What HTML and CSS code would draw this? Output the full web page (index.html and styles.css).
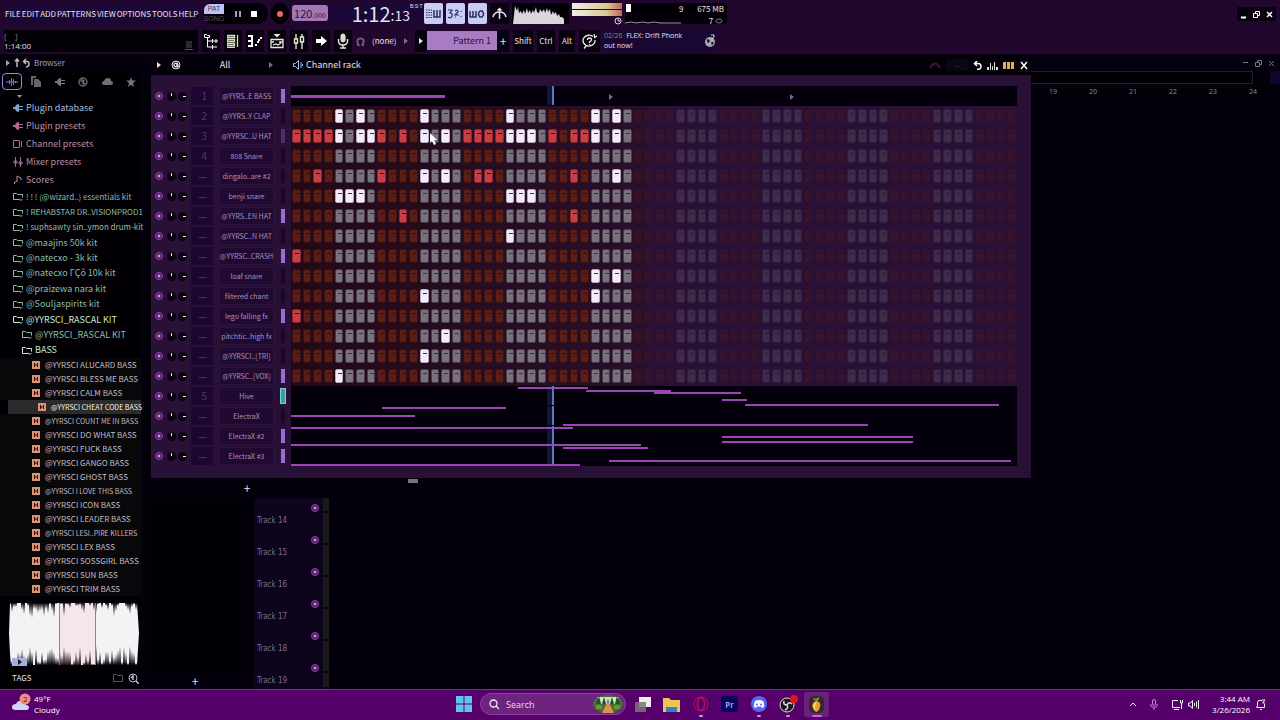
FILE: index.html
```
<!DOCTYPE html>
<html lang="en">
<head>
    <meta charset="UTF-8">
    <meta name="viewport" content="width=device-width, initial-scale=1.0">
    <title>FL Studio - Channel rack</title>
    <link rel="stylesheet" href="styles.css">
</head>
<body>
    <header class="toolbar">
        <div class="bar">
            <nav class="menu">
                <a href="#">FILE</a><a href="#">EDIT</a><a href="#">ADD</a><a href="#">PATTERNS</a><a href="#">VIEW</a><a href="#">OPTIONS</a><a href="#">TOOLS</a><a href="#">HELP</a>
            </nav>
            <div class="transport">
                <button class="mode"><span class="pat">PAT</span><span class="song">SONG</span></button>
                <button aria-label="Pause"><svg width="6" height="6"><path d="M0 0h2v6H0zM4 0h2v6H4z" fill="#a99fb5"/></svg></button>
                <button aria-label="Stop"><svg width="6" height="6"><path d="M0 0h6v6H0z" fill="#fff"/></svg></button>
            </div>
            <button class="rec" aria-label="Record"></button>
            <button class="tempo">120<small>.000</small></button>
            <div class="clock">1:12<span>:13</span><sup>B:S:T</sup></div>
            <button class="lit" aria-label="Typing keyboard"><svg width="17" height="12" viewBox="0 0 17 12" stroke="#273064" fill="none"><path d="M1 2h6M1 4.500h6M1 7h6M1 9.500h6" stroke-dasharray="1.500 .8"/><path d="M9 2v7h6V2M12 2v7" stroke-width="1.500"/></svg></button>
            <button class="lit" aria-label="Countdown"><svg width="17" height="12" viewBox="0 0 17 12" stroke="#273064" fill="none" stroke-width="1.200"><path d="M1 2h4L3 5q3 0 2 3t-4 1M8 9h1M8 3q3-2 3 1L8 7h4M14 3v1M14 8v1"/></svg></button>
            <button class="lit" aria-label="Loop record"><svg width="17" height="12" viewBox="0 0 17 12" stroke="#273064" fill="none" stroke-width="1.500"><path d="M1 3v6h6V3M4 3v6M11 9q-3-3 0-6h3M13 3q3 3 0 6h-3"/></svg></button>
            <button class="dark" aria-label="Metronome"><svg width="17" height="13" viewBox="0 0 17 13" stroke="#e8e4ee" fill="none" stroke-width="1.500"><path d="M2 10q1-5 6.500-5T15 10M8.500 1v11M6.500 3.500l2-2 2 2"/></svg></button>
            <svg class="spectrum" viewBox="0 0 57 21" preserveAspectRatio="none"><path d="M1 21L3 3l2 5 1-4 1 6 2-2 1 3 2-4 1 4 2-6 1 5 2-3 1 4 2-4 1 3 2-6 1 5 2 1 1-4 2 3 2-3 1 4 2-5 1 4 2-3 1 6 2-4 1 3 2-2 1 4 2-2 1 3 2 0 2 2v10z" fill="#d9d6dd"/></svg>
            <div class="meter">
                <div class="level"></div><div class="level"></div>
                <svg width="8" height="8" viewBox="0 0 8 8" fill="none" stroke="#d8d8d8"><circle cx="4" cy="4" r="3"/><path d="M4 2v2h2"/></svg>
            </div>
            <div class="stats">
                <svg class="cpu" viewBox="0 0 60 21"><path d="M1 1h5v8H1z" fill="#fff"/><path d="M0 20l6-1 5 1 7-1 5 1 6-1 6 1h21" stroke="#9b97a3" fill="none"/></svg>
                <span>9</span>
                <span class="ram">675 MB<br>7 <svg width="9" height="6" viewBox="0 0 9 6"><ellipse cx="4" cy="3" rx="3" ry="2" fill="none" stroke="#777"/></svg></span>
            </div>
            <div class="window-buttons">
                <button aria-label="Minimize"><svg width="9" height="9" stroke="#fff"><path d="M2 7.500h5" stroke-width="2"/></svg></button>
                <button aria-label="Restore"><svg width="9" height="9" stroke="#fff" fill="none"><path d="M1.500 3.500h4v4h-4zM3.500 3V1.500h4v4H6"/></svg></button>
                <button aria-label="Close"><svg width="9" height="9" stroke="#fff" stroke-width="1.500"><path d="M2 2l5 5M7 2L2 7"/></svg></button>
            </div>
        </div>
        <div class="bar second">
            <div class="hint"><span>[&nbsp;&nbsp;&nbsp; ]</span><b>1:14:00</b>
                <svg width="10" height="10" viewBox="0 0 10 10" stroke="#55505c" fill="none"><path d="M3 0v7M5 0v7M7 0v7M1 8.500h8"/></svg>
            </div>
            <button class="tool" aria-label="Playlist"><svg width="14" height="16" viewBox="0 0 14 16" stroke="#fff" fill="none"><path d="M.5 1.500h2l1 1h2v2h-5zM3.500 5v9H8M3.500 8H8M8.500 6v4M8.500 12v4M9 8h5M9 14h4M12 6v4"/></svg></button>
            <button class="tool" aria-label="Piano roll"><svg width="12" height="14" viewBox="0 0 12 14" stroke="#cfe3b4" fill="none"><path d="M.5 1.500h7v2h-7zM.5 5.500h7v2h-7zM.5 9.500h7v2h-7zM10.500 1v12M0 13.500h8" stroke-width="1.300"/></svg></button>
            <button class="tool" aria-label="Channel rack"><svg width="14" height="12" viewBox="0 0 14 12" fill="#fff"><path d="M0 0h5v2H0zM0 5h5v2H0zM0 10h5v2H0zM3 0h2v12H3zM7 9h2v2H7zM9 6h2v2H9zM10 4h2v2h-2zM12 2h2v2h-2z"/></svg></button>
            <button class="tool" aria-label="Event editor"><svg width="14" height="15" viewBox="0 0 14 15" stroke="#e7eadb" fill="none"><path d="M5 .5h4L7 2.500zM1 5.500h12v8H1zM1 8h3M9 8h4M3 11l3-1 2 1 3-2" stroke-width="1.300"/></svg></button>
            <button class="tool" aria-label="Mixer"><svg width="12" height="15" viewBox="0 0 12 15" stroke="#dfe8cf" fill="none"><path d="M3 0v5M3 9v6M9 0v3M9 7v8M1.500 5h3v4h-3zM7.500 3h3v5h-3z" stroke-width="1.400"/></svg></button>
            <button class="tool" aria-label="Next"><svg width="11" height="10"><path d="M0 3h5V0l6 5-6 5V7H0z" fill="#fff"/></svg></button>
            <button class="tool" aria-label="Microphone"><svg width="12" height="16" viewBox="0 0 12 16" fill="none" stroke="#e8e8dc"><rect x="4" y="1" width="4" height="8" rx="2" fill="#dadaca"/><path d="M1.500 6v2q0 4 4.500 4t4.500-4V6M6 12v3M3 15h6" stroke-width="1.400"/></svg></button>
            <label class="snap"><svg width="9" height="9" viewBox="0 0 9 9" fill="none" stroke="#67616d" stroke-width="2"><path d="M1 8h1.500Q-.5 1.500 4.500 1.500T6.500 8H8"/></svg><select aria-label="Snap"><option>(none)</option></select><i class="arrow grey"></i></label>
            <div class="pattern"><button aria-label="Previous"><i class="arrow"></i></button><select aria-label="Pattern"><option>Pattern 1</option></select><button aria-label="Add pattern">+</button></div>
            <button class="key shift">Shift</button>
            <button class="key">Ctrl</button>
            <button class="key alt">Alt</button>
            <button class="help" aria-label="Help"><svg width="16" height="15" viewBox="0 0 16 15" stroke="#eee" fill="none" stroke-width="1.300"><path d="M11 2.500A6 5.500 0 1 0 13 6M4 12l-2 2.500M5.500 6q0-2 2-2t2 1.500T7.500 8v1M7.500 10v1M12 0l1 4M15 2l-3 2"/></svg></button>
            <div class="news"><p><span>02/26</span>&nbsp; FLEX: Drift Phonk<br>out now!</p><svg width="12" height="14" viewBox="0 0 12 14"><circle cx="6" cy="8" r="5" fill="#aaa5b3"/><path d="M3 5l3 1-1 3-2-1zM7 8h3l-2 4z" fill="#261638"/><path d="M7 1h3v2l-2 2" stroke="#ddd" fill="none"/></svg></div>
        </div>
    </header>

    <main class="desk">
        <aside class="browser">
            <div class="browser-title"><i class="arrow"></i><svg width="16" height="10" viewBox="0 0 16 10" fill="none" stroke="#bbb" stroke-width="1.500"><path d="M3 9V1M1 3.500l2-2.500 2 2.500M10 3.500h3q2 0 2 2.500t-3 3M12 1L9.500 3.500 12 6"/></svg>Browser</div>
            <div class="tabs">
                <button class="active" aria-label="All"><svg width="12" height="10" stroke="#7476e8"><path d="M0 5h12M3.500 3v4M5.500 1v8M7.500 2v6M9.500 4v2"/></svg></button>
                <button aria-label="Files"><svg width="10" height="11" fill="#666"><path d="M0 0h5v2H2v7H0zM3 3h4l3 3v5H3z"/></svg></button>
                <button aria-label="Plugins"><svg width="10" height="8"><path d="M0 3h2q1-3 4-3v2h4v1H6v2h4v1H6v2Q3 8 2 5H0z" fill="#777"/></svg></button>
                <button aria-label="Online"><svg width="10" height="10"><circle cx="5" cy="5" r="4" fill="none" stroke="#666" stroke-width="1.500"/><path d="M3 2l4 1-1 2 2 2-3 1-1-3-2-1z" fill="#666"/></svg></button>
                <button aria-label="Cloud"><svg width="11" height="7"><path d="M2 7Q0 7 0 5t2-2q1-3 4-3t3 3q2 0 2 2T9 7z" fill="#707070"/></svg></button>
                <button aria-label="Starred"><svg width="10" height="10" viewBox="0 0 10 10"><path d="M5 0l1.200 3.500H10L7 6l1 4-3-2.300L2 10l1-4-3-2.500h3.800z" fill="#777"/></svg></button>
            </div>
            <div class="more"><svg width="5" height="3"><path d="M0 0h5L2.500 3z" fill="#999"/></svg></div>
            <ul class="presets">
                <li class="blue"><svg width="10" height="8"><path d="M0 3h2q1-3 4-3v2h4v1H6v2h4v1H6v2Q3 8 2 5H0z" fill="#7da4d1"/></svg>Plugin database</li>
                <li><svg width="10" height="8"><path d="M0 3h2q1-3 4-3v2h4v1H6v2h4v1H6v2Q3 8 2 5H0z" fill="#b56a8c"/></svg>Plugin presets</li>
                <li><svg width="10" height="8" fill="none" stroke="#b56a8c"><path d="M.5.500h6v7h-6zM8.500 1v6"/></svg>Channel presets</li>
                <li><svg width="10" height="10" fill="none" stroke="#9a7484"><path d="M2.500 0v10M7.500 0v10M1 4h3v2H1zM6 5h3v2H6z"/></svg>Mixer presets</li>
                <li><svg width="10" height="10" fill="none" stroke="#b5909f"><path d="M2 9q-2-1 0-2t2 0V1l4 2v2"/></svg>Scores</li>
            </ul>
            <ul class="folders" id="folders"></ul>
            <ul class="samples" id="samples"></ul>
            <div class="preview"><svg id="wave" viewBox="0 0 130 62" preserveAspectRatio="none"></svg><button aria-label="Play sample"><i class="arrow"></i></button></div>
            <div class="tags">TAGS<svg width="10" height="8" fill="none" stroke="#555"><path d="M.5 7.500v-7h3l1 1h5v6z"/></svg><svg width="11" height="11" fill="none" stroke="#b4c3da"><circle cx="5" cy="5" r="4"/><path d="M8 8l3 3M3 5l2-2v4" stroke-width="1.500"/></svg></div>
        </aside>

        <section class="playlist">
            <div class="playlist-title">
                <button aria-label="Minimize"><svg width="9" height="9" stroke="#77727f"><path d="M2 3.500h5"/></svg></button>
                <button aria-label="Restore"><svg width="9" height="9" stroke="#77727f" fill="none"><path d="M1.500 3.500h4v4h-4zM3.500 3V1.500h4v4H6"/></svg></button>
                <button aria-label="Close"><svg width="9" height="9" stroke="#77727f"><path d="M2 2l5 5M7 2L2 7"/></svg></button>
            </div>
            <div class="overview"><div></div><span></span></div>
            <div class="ruler"><span>19</span><span>20</span><span>21</span><span>22</span><span>23</span><span>24</span></div>
            <div class="arrangement">
                <div class="picker"><button aria-label="Add clip">+</button></div>
                <div class="tracks" id="tracks"></div>
                <div class="lanes"></div>
            </div>

            <section class="rack">
                <div class="rack-title">
                    <i class="arrow"></i>
                    <svg width="10" height="10" viewBox="0 0 10 10" fill="none" stroke="#eee"><circle cx="5" cy="5" r="4"/><path d="M7 3.500q-4-1-4 1.500t4 1.500V5H5" stroke-width="1.300"/></svg>
                    <select aria-label="Channel filter"><option>All</option></select><i class="arrow grey"></i>
                    <h2><svg width="10" height="10" viewBox="0 0 10 10" fill="none" stroke="#9fc0ef"><path d="M.5 3.500h2l3-3v9l-3-3h-2zM8 2v6M9.500 4v2"/></svg>Channel rack</h2>
                    <div class="rack-tools">
                        <svg width="12" height="9" fill="none" stroke="#4a1030" stroke-width="2"><path d="M1 7q5-9 10 0"/></svg>
                        <span class="swing">–</span>
                        <button aria-label="Undo"><svg width="9" height="9" fill="none" stroke="#fff" stroke-width="1.500"><path d="M4 0L1.500 2.500 4 5M2 2.500h3q3 0 3 3T4 8.500"/></svg></button>
                        <button aria-label="Graph"><svg width="11" height="9" fill="#ddd"><path d="M0 6h2v3H0zM3 2h1v7H3zM5 5h1v4H5zM7 1h1v8H7zM9 6h2v3H9z"/></svg></button>
                        <button aria-label="Steps"><svg width="12" height="8" fill="#e2b04e"><path d="M0 1h3v7H0zM4 1h3v7H4zM8 1h3v7H8z"/></svg></button>
                        <button aria-label="Close rack"><svg width="9" height="9" stroke="#fff" stroke-width="1.500"><path d="M1 1l6 7M7 1L1 8"/></svg></button>
                    </div>
                </div>
                <div class="channels" id="channels"></div>
                <div class="rack-foot"><button aria-label="Add channel">+</button><span></span></div>
            </section>
        </section>
    </main>

    <footer class="taskbar">
        <div class="weather">
            <svg width="20" height="18" viewBox="0 0 20 18"><path d="M3 17q-3 0-3-3t4-3q2-4 6-3t4 4q3 0 3 2.500T14 17z" fill="#cdd6f5"/><circle cx="13" cy="6" r="5.500" fill="#ef8d86"/><text x="11" y="9" font-size="8" fill="#51202e">2</text></svg>
            <p>49°F<br>Cloudy</p>
        </div>
        <div class="apps">
            <button aria-label="Start"><svg width="16" height="16" fill="#63c4f2"><path d="M0 0h7.500v7.500H0zM8.500 0H16v7.500H8.500zM0 8.500h7.500V16H0zM8.500 8.500H16V16H8.500z"/></svg></button>
            <label class="search">
                <svg width="11" height="11" fill="none" stroke="#eee" stroke-width="1.300"><circle cx="4.500" cy="4.500" r="3.500"/><path d="M7 7l3 3"/></svg>
                <input type="text" placeholder="Search" aria-label="Search">
                <svg class="forest" width="30" height="18" viewBox="0 0 30 18"><ellipse cx="15" cy="9" rx="15" ry="9" fill="#45702f"/><path d="M4 2h22l-4 7H8z" fill="#cfe0c8"/><path d="M6 1l2 8H3zM11 2l2 7H9zM19 2l2 7h-4zM24 1l3 8h-5zM15 3l1 6h-2z" fill="#245226"/><path d="M14 8h2l5 10H9z" fill="#e09057"/><path d="M3 10h6v4H3zM21 10h6v4h-6z" fill="#5f9b38"/></svg>
            </label>
            <button aria-label="Task view"><svg width="16" height="15"><path d="M4 0h12v10H4z" fill="#eee"/><path d="M0 5h11v10H0z" fill="#777" fill-opacity=".85"/></svg></button>
            <button aria-label="File Explorer"><svg width="17" height="15"><path d="M0 1h6l2 2h9v12H0z" fill="#f1c354"/><path d="M3 10h11v5H3z" fill="#2e86c9"/></svg></button>
            <button class="run" aria-label="Opera GX"><svg width="16" height="16" fill="none" stroke="#c3135b"><circle cx="8" cy="8" r="7"/><ellipse cx="8" cy="8" rx="3.500" ry="6" stroke-width="1.500"/></svg></button>
            <button class="pr">Pr</button>
            <button class="run" aria-label="Discord"><svg width="16" height="16" viewBox="0 0 16 16"><circle cx="8" cy="8" r="8" fill="#5865f2"/><path d="M4 5q4-2 8 0 1.500 3 1 6l-2 1-1-1.500H6L5 12l-2-1q-.5-3 1-6z" fill="#fff"/><circle cx="6" cy="8.500" r="1" fill="#5865f2"/><circle cx="10" cy="8.500" r="1" fill="#5865f2"/></svg></button>
            <button class="run" aria-label="OBS Studio"><svg width="20" height="18" viewBox="0 0 20 18"><circle cx="9" cy="10" r="7" fill="#1c1620" stroke="#ddd"/><path d="M9 10q-4 0-3-4M9 10q2-4 5-1M9 10q2 3-2 5" stroke="#ddd" fill="none" stroke-width="1.500"/><circle cx="16" cy="4" r="4" fill="#e3141c"/></svg></button>
            <button class="run current" aria-label="FL Studio"><svg width="15" height="17" viewBox="0 0 15 17"><rect width="15" height="17" rx="5" fill="#35282a"/><path d="M7.500 5q5 1 3.500 6-1 4-3.500 5-3-1-4-5-1-5 4-6z" fill="#ee9b2d"/><path d="M8 5q-3 6-1 10-3-3-3-6z" fill="#fbdb6d"/><path d="M7 5q-3-1-3-3l3 1 3-2q1 3-3 4z" fill="#74a83f"/></svg></button>
        </div>
        <div class="tray">
            <svg width="8" height="5" fill="none" stroke="#eee"><path d="M1 4l3-3 3 3"/></svg>
            <svg width="8" height="11" fill="none" stroke="#c58bcf"><rect x="2.500" y=".5" width="3" height="6" rx="1.500"/><path d="M.5 5q0 3.500 3.500 3.500T7.500 5M4 9v2"/></svg>
            <svg width="28" height="11" fill="none" stroke="#eee"><path d="M7 1.500H1.500v7H9M3 10.500h5M9.500 1v3h2V1M10.500 4v6M17.500 4v3h2l2 2.500v-8L19.500 4zM23.500 4v3M25.500 2.500v6M27.500 1v9"/></svg>
            <p>3:44 AM<br>3/26/2026</p>
            <svg width="10" height="11" fill="none" stroke="#eee"><path d="M6 1.500H3Q1.500 1.500 1.500 4v3L.5 8.500h8V5M4 10.500h2M6 1h3L6.500 4H9"/></svg>
        </div>
    </footer>

    <svg class="cursor" width="7" height="12" viewBox="0 0 7 12"><path d="M0 0l7 7H4l2 4-2 1-2-4-2 2z" fill="#fff"/></svg>
    <script src="script.js"></script>
</body>
</html>
```

FILE: styles.css
```
* {
    box-sizing: border-box;
}
body {
    margin: 0;
    height: 100vh;
    display: flex;
    flex-direction: column;
    overflow: hidden;
    background: #020009;
    color: #e6e0ec;
    font-family: "Noto Sans CJK SC", sans-serif;
    font-size: 10px;
    line-height: 12px;
}
button, select, input {
    font: inherit;
    color: inherit;
    background: none;
    border: 0;
    padding: 0;
    margin: 0;
    appearance: none;
}
button {
    display: flex;
    align-items: center;
    justify-content: center;
}
ul, p, h2 {
    margin: 0;
    padding: 0;
    list-style: none;
    font-weight: normal;
}
svg {
    display: block;
    flex: none;
}
.arrow {
    flex: none;
    border: 3px solid transparent;
    border-left: 4px solid #e6e0ec;
    border-right: 0;
}
.arrow.grey {
    border-left-color: #77717d;
}

/* toolbar */
.toolbar {
    height: 55px;
    flex: none;
    background: #21072d;
    border-bottom: 1px solid #08020f;
}
.bar {
    display: flex;
    gap: 3px;
    height: 27px;
    padding: 3px 4px 3px 4px;
    align-items: stretch;
}
.bar.second {
    gap: 4px;
    padding: 3px 4px 2px 4px;
}
.bar > * {
    flex: none;
}
.menu {
    width: 196px;
    display: flex;
    align-items: center;
    gap: 1px;
    padding-left: 1px;
    background: #1c0836;
    font-size: 8px;
}
.menu a {
    color: #e6e0ec;
    text-decoration: none;
}
.transport {
    width: 65px;
    display: flex;
    align-items: center;
    gap: 10px;
    background: #020006;
    border-radius: 10px;
}
.mode {
    flex-direction: column;
    width: 22px;
    height: 20px;
    font: 7px/10px "Liberation Sans", sans-serif;
}
.pat {
    width: 20px;
    background: #c3c2ef;
    color: #3c3b6b;
    border-radius: 6px 0 0 0;
}
.song {
    color: #55505e;
}
.rec {
    width: 18px;
    background: #020006;
    border-radius: 9px;
}
.rec::before {
    content: "";
    width: 6px;
    height: 6px;
    border-radius: 3px;
    background: #ee6672;
}
.tempo {
    width: 36px;
    margin: 2px 0 3px;
    background: #a279b6;
    border-radius: 3px;
    color: #2c1238;
    font-size: 11px;
}
.tempo small {
    font-size: 7px;
    padding-top: 3px;
}
.clock {
    width: 90px;
    display: flex;
    align-items: center;
    justify-content: flex-end;
    background: #1a0837;
    font-size: 20px;
}
.clock span {
    font-size: 14px;
    padding-top: 3px;
}
.clock sup {
    align-self: flex-start;
    width: 11px;
    font: 5px/6px "Liberation Sans", sans-serif;
}
.lit {
    width: 19px;
    background: #c9cdf6;
    border-radius: 2px;
}
.dark {
    width: 19px;
    background: #08020e;
}
.spectrum {
    width: 57px;
    height: 21px;
    background: #020006;
}
.meter {
    width: 50px;
}
.meter svg {
    margin-left: auto;
}
.level {
    height: 6px;
    margin-bottom: 1px;
    background: linear-gradient(90deg, #f0ede6, #d9c891 70%, #c1655d);
}
.stats {
    width: 102px;
    display: flex;
    background: #020006;
    font-size: 8px;
    line-height: 12px;
}
.cpu {
    width: 60px;
    height: 21px;
    margin-right: -6px;
}
.ram {
    margin-left: auto;
    padding-right: 3px;
    text-align: right;
}
.ram svg {
    display: inline-block;
}
.window-buttons {
    display: flex;
    align-items: center;
    height: 14px;
    margin: 4px 0 0 auto;
    background: #08020e;
}
.window-buttons button {
    width: 13px;
}
.hint {
    width: 194px;
    background: #030008;
    font: 8px/10px "Open Sans", sans-serif;
    display: grid;
    grid-template-columns: 1fr 14px;
    align-content: center;
}
.hint span {
    color: #87808f;
    grid-column: 1 / 3;
}
.hint b {
    font-weight: 400;
}
.tool, .help {
    width: 18px;
    background: #08020e;
}
.snap {
    width: 55px;
    display: flex;
    align-items: center;
    justify-content: space-between;
    padding-right: 3px;
    font-size: 8px;
}
.pattern {
    width: 94px;
    display: flex;
}
.pattern button {
    width: 12px;
    background: #08020e;
    font-size: 12px;
}
.pattern select {
    flex: 1;
    margin: 1px 0 2px;
    padding-right: 6px;
    background: #a77cc2;
    color: #29133a;
    text-align-last: right;
    font-size: 9px;
}
.key {
    width: 18px;
    background: #08020e;
    font-size: 8px;
}
.shift {
    width: 20px;
}
.alt {
    width: 16px;
}
.help {
    width: 21px;
}
.news {
    width: 112px;
    display: flex;
    align-items: center;
    justify-content: space-between;
    background: #180732;
    font: 7px/10px "Open Sans", sans-serif;
}
.news span {
    color: #8d8596;
}

/* browser */
.desk {
    flex: 1;
    min-height: 0;
    display: flex;
}
.browser {
    width: 146px;
    flex: none;
    display: flex;
    flex-direction: column;
    background: #020004;
    border-right: 5px solid #04010f;
}
.browser-title {
    height: 16px;
    display: flex;
    align-items: center;
    gap: 4px;
    padding-left: 6px;
    background: #04010c;
    color: #a7a1ae;
    font-size: 8px;
}
.browser-title .arrow {
    border-left-color: #a7a1ae;
}
.tabs {
    display: flex;
    height: 22px;
    padding: 2px 0 2px 2px;
    gap: 4px;
}
.tabs button {
    width: 20px;
    height: 17px;
    border-radius: 4px;
}
.tabs .active {
    border: 1px solid #8d8fd6;
}
.more {
    height: 6px;
    padding: 2px 0 0 17px;
}
.presets li {
    display: flex;
    align-items: center;
    gap: 3px;
    height: 18px;
    padding-left: 13px;
    color: #b98fa4;
    font-size: 9px;
}
.presets .blue {
    color: #a3bedb;
}
.folders {
    height: 169px;
    display: flex;
    flex-direction: column;
    color: #8dbfa4;
    font-size: 9px;
}
.folders li {
    flex: 1;
    display: flex;
    align-items: center;
    gap: 3px;
    padding-left: 13px;
    white-space: nowrap;
}
.folders .long {
    font-size: 8px;
}
.folders .sub {
    padding-left: 22px;
}
.folders .open {
    color: #c3ecd2;
}
.samples {
    font-size: 8px;
}
.samples li {
    display: flex;
    align-items: center;
    gap: 5px;
    height: 14px;
    padding-left: 32px;
    color: #c3b9c2;
    white-space: nowrap;
    background: #08080a;
}
.samples .long {
    font-size: 7px;
}
.samples .selected {
    margin-left: 8px;
    padding-left: 30px;
    background: #2b2b2d;
    color: #fff4e0;
}
.preview {
    position: relative;
    height: 70px;
    padding: 7px 2px 0 9px;
}
.preview svg {
    width: 130px;
    height: 62px;
}
.preview button {
    position: absolute;
    left: 12px;
    bottom: 0;
    width: 15px;
    height: 8px;
    background: #a6b0dc;
}
.preview .arrow {
    border-left-color: #15152a;
}
.tags {
    margin-top: auto;
    height: 22px;
    display: flex;
    align-items: center;
    gap: 5px;
    padding: 0 2px 0 12px;
    font-size: 8px;
}
.tags svg:first-of-type {
    margin-left: auto;
}

/* playlist */
.playlist {
    flex: 1;
    min-width: 0;
    position: relative;
    display: flex;
    flex-direction: column;
}
.playlist-title {
    height: 16px;
    display: flex;
    justify-content: flex-end;
    gap: 4px;
    padding-right: 4px;
    background: #05010f;
}
.overview {
    display: flex;
    justify-content: space-between;
    height: 13px;
}
.overview div {
    flex: 1;
    margin: 0 17px 0 10px;
    border: 1px solid #242028;
    background: #020004;
}
.overview span {
    width: 10px;
    background: #12042a;
}
.ruler {
    height: 14px;
    display: flex;
    justify-content: flex-end;
    padding-right: 7px;
    font: 7px/15px "Open Sans", sans-serif;
    color: #8f8a95;
}
.ruler span {
    width: 40px;
    text-align: center;
}
.arrangement {
    flex: 1;
    min-height: 0;
    display: flex;
}
.picker {
    width: 108px;
    display: flex;
    align-items: flex-end;
    justify-content: center;
    background: #020006;
}
.picker button {
    width: 100%;
    height: 16px;
    padding-right: 10px;
    background: #04010d;
    font-size: 12px;
}
.tracks {
    width: 75px;
    display: flex;
    flex-direction: column;
    justify-content: flex-end;
    overflow: hidden;
}
.track {
    flex: none;
    display: grid;
    grid-template-columns: 1fr 12px 6px;
    height: 32px;
    background: #0e041c;
    color: #7a7282;
    font: 8px/15px "DejaVu Sans Condensed", sans-serif;
}
.track span {
    padding-left: 3px;
}
.track .led {
    align-self: end;
    margin-bottom: 1px;
}
.track::after {
    content: "";
    background: #1b191c;
    margin-bottom: 2px;
}
.track:last-child {
    height: 16px;
}
.track:last-child .led {
    visibility: hidden;
}
.lanes {
    flex: 1;
    background: repeating-linear-gradient(#02000b 0 31px, #010007 31px 32px);
}

/* channel rack window */
.rack {
    position: absolute;
    left: 5px;
    right: 249px;
    top: 0;
    background: #291037;
}
.rack-title {
    display: flex;
    align-items: center;
    height: 20px;
    padding: 0 2px 0 6px;
    gap: 10px;
    background: #030009;
}
.rack-title select {
    width: 68px;
    text-align-last: center;
    font-size: 9px;
}
.rack-title h2 {
    display: flex;
    align-items: center;
    gap: 3px;
    margin-left: 10px;
    font-size: 9px;
    line-height: 14px;
}
.rack-tools {
    display: flex;
    align-items: center;
    gap: 5px;
    margin-left: auto;
}
.swing {
    width: 22px;
    background: #0b0712;
    color: #333;
    text-align: center;
}
.channels {
    padding: 11px 14px 12px 4px;
}
.channel {
    display: grid;
    grid-template-columns: 12px 11px 13px 28px 62px 10px 1fr;
    align-items: center;
    height: 20px;
}
.led {
    width: 8px;
    height: 8px;
    border: 1px solid #9b49b4;
    border-radius: 4px;
    background: radial-gradient(#d88ae6 1px, #40124e 2px);
}
.knob {
    width: 9px;
    height: 9px;
    border-radius: 5px;
    background: linear-gradient(#eee, #eee) 4px 1px / 1px 3px no-repeat #0b0411;
}
.knob.vol {
    background: linear-gradient(#eee, #eee) 5px 4px / 3px 1px no-repeat #0b0411;
}
.insert {
    width: 22px;
    height: 18px;
    padding-right: 6px;
    background: #1d0730;
    color: #52337a;
    text-align: right;
    font-size: 10px;
    line-height: 18px;
}
.name {
    width: 55px;
    height: 18px;
    background: #210a32;
    border: 1px solid #2d1440;
    color: #a990b9;
    font-size: 7px;
    white-space: nowrap;
}
.select {
    width: 4px;
    height: 14px;
    background: #180726;
}
.select.on {
    background: #9b6bd4;
}
.select.half {
    background: #513069;
}
.select.focus {
    background: #459aa3;
    outline: 1px solid #78d1d4;
}
.steps {
    display: grid;
    grid-template-columns: repeat(68, 1fr);
    height: 20px;
    align-items: center;
    background: linear-gradient(90deg, #240916, #280f2b 48%, #291037 50%);
}
.step {
    height: 14px;
    margin: 0 1px;
    border: 1px solid #39100f;
    border-radius: 2px;
    background: linear-gradient(#2b0b0c, #2b0b0c) 2px 3px / 4px 1px no-repeat #5a1e18;
}
.step.grey {
    border-color: #453d4b;
    background: linear-gradient(#38313f, #38313f) 2px 3px / 4px 1px no-repeat #79727d;
}
.step:checked {
    border-color: #8b252c;
    background-color: #c63f45;
}
.step.grey:checked {
    border-color: #b3a9c0;
    background-color: #f4ecf9;
}
.step.idle {
    opacity: 0.28;
}
.roll {
    width: 100%;
    height: 20px;
    background: #03000b;
}
.rack-foot {
    height: 20px;
    display: flex;
    background: #020009;
}
.rack-foot button {
    width: 12px;
    margin-left: 90px;
    font-size: 12px;
}
.rack-foot span {
    width: 10px;
    height: 4px;
    margin: 1px 0 0 155px;
    background: #77737c;
}

/* taskbar */
.taskbar {
    height: 31px;
    flex: none;
    display: grid;
    grid-template-columns: 1fr auto 1fr;
    align-items: center;
    padding-bottom: 2px;
    background: #56006b;
    border-top: 1px solid #793188;
    color: #fff;
    font: 8px/11px "Open Sans", sans-serif;
}
.weather {
    display: flex;
    gap: 2px;
    padding-left: 12px;
}
.apps {
    display: flex;
    align-items: center;
    gap: 4px;
}
.apps > button {
    position: relative;
    width: 25px;
    height: 25px;
    border-radius: 3px;
}
.search {
    display: flex;
    align-items: center;
    width: 146px;
    height: 22px;
    padding: 0 2px 0 8px;
    gap: 6px;
    border: 1px solid #8a4299;
    border-radius: 11px;
    background: #6e2380;
}
.search input {
    flex: 1;
    min-width: 0;
    font-size: 9px;
}
.search input::placeholder {
    color: #eadcee;
}
.apps > .pr {
    width: 17px;
    height: 16px;
    margin: 0 4px;
    background: #06065f;
    color: #b9b4ff;
    font-weight: 600;
}
.run::after {
    content: "";
    position: absolute;
    bottom: 0;
    width: 4px;
    height: 2px;
    background: #c99ad2;
    border-radius: 1px;
}
.apps .current {
    background: #692278;
}
.current::after {
    width: 10px;
    background: #cf62dd;
}
.tray {
    display: flex;
    align-items: center;
    justify-content: flex-end;
    gap: 13px;
    padding-right: 14px;
    text-align: right;
}
.tray p {
    margin-right: -7px;
}

.cursor {
    position: absolute;
    left: 430px;
    top: 133px;
}
```

FILE: script.js
```
const folders = [
    ['! ! ! (@wizard..) essentials kit', 'long'],
    ['! REHABSTAR DR..VISIONPROD1', 'long'],
    ['! suphsawty sin..ymon drum-kit', 'long'],
    ['@maajins 50k kit'],
    ['@natecxo - 3k kit'],
    ['@natecxo ΓÇô 10k kit'],
    ['@praizewa nara kit'],
    ['@Souljaspirits kit'],
    ['@YYRSCI_RASCAL KIT', 'open'],
    ['@YYRSCI_RASCAL KIT', 'sub'],
    ['BASS', 'sub open']
];

const samples = ['ALUCARD BASS', 'BLESS ME BASS', 'CALM BASS', 'CHEAT CODE BASS', 'COUNT ME IN BASS',
    'DO WHAT BASS', 'FUCK BASS', 'GANGO BASS', 'GHOST BASS', 'I LOVE THIS BASS', 'ICON BASS', 'LEADER BASS',
    'LESI..PIRE KILLERS', 'LEX BASS', 'SOSSGIRL BASS', 'SUN BASS', 'TRIM BASS'];
const selectedSample = 3;

// steps: lit step numbers; notes: [x, y, width, height] in a 726 x 20 roll
const channels = [
    { name: '@YYRS..E BASS', insert: '1', select: 'on', notes: [[0, 9, 154, 3]], marks: [318, 499] },
    { name: '@YYRS..Y CLAP', insert: '2', steps: [4, 6, 12, 20, 28, 30] },
    { name: '@YYRSC..U HAT', insert: '3', select: 'half', steps: [0, 1, 2, 3, 4, 6, 7, 8, 10, 12, 14, 16, 17, 18, 19, 20, 21, 22, 24, 26, 27, 28, 30] },
    { name: '808 Snare', insert: '4', steps: [] },
    { name: 'dingalo..are #2', steps: [2, 8, 12, 14, 17, 18, 26, 30] },
    { name: 'benji snare', steps: [4, 5, 6, 20, 21, 22] },
    { name: '@YYRS..EN HAT', select: 'on', steps: [10, 26] },
    { name: '@YYRSC..N HAT', steps: [20] },
    { name: '@YYRSC..CRASH', select: 'on', steps: [0] },
    { name: 'loaf snare', steps: [28, 30] },
    { name: 'filtered chant', steps: [12, 28] },
    { name: 'lego falling fx', select: 'on', steps: [0] },
    { name: 'pitchtic..high fx', steps: [14] },
    { name: '@YYRSCI..[TRI]', steps: [12] },
    { name: '@YYRSC..[VOX]', select: 'on', steps: [4] },
    { name: 'Hive', insert: '5', select: 'focus', notes: [[227, 1, 70, 2], [295, 4, 85, 2], [363, 6, 87, 2], [431, 13, 25, 2], [454, 18, 254, 2]] },
    { name: 'ElectraX', notes: [[91, 1, 124, 2], [0, 9, 124, 2], [272, 18, 305, 2]] },
    { name: 'ElectraX #2', select: 'on', notes: [[0, 1, 282, 2], [431, 10, 191, 2], [431, 15, 191, 2], [0, 18, 350, 2]] },
    { name: 'ElectraX #3', select: 'on', notes: [[272, 1, 85, 2], [318, 14, 402, 2], [0, 18, 289, 2]] }
];

const folderIcon = '<svg width="10" height="9" fill="none" stroke="currentColor"><path d="M6 7.500H.5v-6h3l1 1h5v3M6 7l2 1.500L9.500 7"/></svg>';
const sampleIcon = '<svg width="8" height="8"><path d="M0 0h8v8H0z" fill="#d89377"/><path d="M2 2h1v4H2zM3 3l2 1-2 1zM5 2h1v4H5z" fill="#2c1210"/></svg>';

document.getElementById('folders').innerHTML = folders
    .map(([name, cls]) => `<li class="${cls || ''}">${folderIcon}${name}</li>`).join('');

document.getElementById('samples').innerHTML = samples.map((name, i) => {
    const cls = (name.length > 14 ? 'long' : '') + (i === selectedSample ? ' selected' : '');
    return `<li class="${cls}">${sampleIcon}@YYRSCI ${name}</li>`;
}).join('');

function stepsHtml(channel) {
    let html = '';
    for (let i = 0; i < 68; i++) {
        const cls = 'step' + (i % 8 > 3 ? ' grey' : '') + (i > 31 ? ' idle' : '');
        const on = channel.steps.includes(i) ? ' checked' : '';
        html += `<input type="checkbox" class="${cls}" aria-label="${channel.name} step ${i + 1}"${on}>`;
    }
    return `<div class="steps">${html}</div>`;
}

function rollHtml(channel) {
    const notes = channel.notes.map(([x, y, w, h]) => `<rect x="${x}" y="${y}" width="${w}" height="${h}" fill="#9c44b4"/>`).join('');
    const marks = (channel.marks || []).map(x => `<path d="M${x} 8l4 3-4 3z" fill="#80609b"/>`).join('');
    return `<svg class="roll" viewBox="0 0 726 20" preserveAspectRatio="none">
        <rect x="256" width="5" height="19" fill="#10143c"/>${notes}
        <rect x="261" width="2" height="19" fill="#5f78ae"/>${marks}</svg>`;
}

document.getElementById('channels').innerHTML = channels.map(c => `
    <div class="channel">
        <span class="led"></span><span class="knob"></span><span class="knob vol"></span>
        <span class="insert">${c.insert || '—'}</span>
        <button class="name">${c.name}</button>
        <span class="select ${c.select || ''}"></span>
        ${c.steps ? stepsHtml(c) : rollHtml(c)}
    </div>`).join('');

let tracks = '<div class="track"><span></span><i class="led"></i></div>';
for (let n = 14; n <= 19; n++) {
    tracks += `<div class="track"><span>Track ${n}</span><i class="led"></i></div>`;
}
document.getElementById('tracks').innerHTML = tracks;

// jagged sample waveform
function drawWave() {
    let upper = '';
    let lower = '';
    for (let x = 1; x <= 128; x++) {
        const r = Math.abs(Math.sin(x * 12.9) * 43.7) % 1;
        const s = Math.abs(Math.sin(x * 78.2) * 43.7) % 1;
        const a = x % 2 ? Math.round(r * r * 15) : 0;
        const b = x % 2 ? Math.round(s * 20) : 0;
        upper += `L${x} ${a} `;
        lower = `L${x} ${62 - b} ` + lower;
    }
    document.getElementById('wave').innerHTML = `<path d="M0 30 ${upper}L130 30 ${lower}z" fill="#f3f3f5"/>
        <rect x="50" width="37" height="62" fill="#ff8fa0" fill-opacity=".12"/>
        <path d="M50.500 0v62M86.500 0v62" stroke="#c96a77"/>`;
}
drawWave();
```
